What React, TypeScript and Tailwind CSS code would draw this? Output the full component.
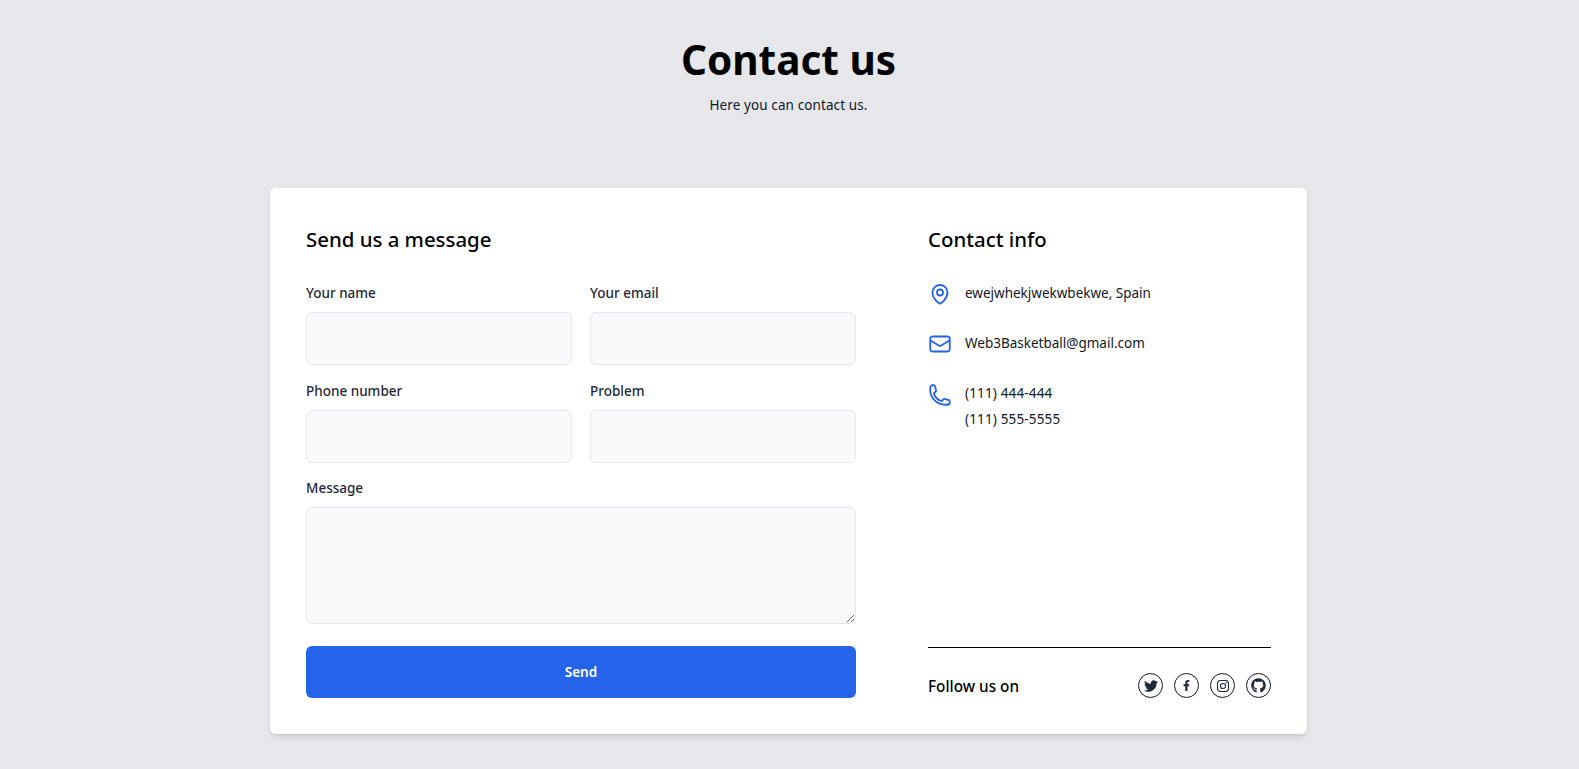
import { HiOutlineEnvelope, HiOutlineMapPin, HiOutlinePhone } from "react-icons/hi2";
import { FaFacebookF, FaGithub, FaTwitter } from "react-icons/fa";
import { BsInstagram } from "react-icons/bs";

const fields = [
  { id: "name", label: "Your name" },
  { id: "email", label: "Your email" },
  { id: "phone", label: "Phone number" },
  { id: "problem", label: "Problem" },
];

const socials = [
  { id: "twitter", icon: <FaTwitter className="w-[14px] h-[14px]" /> },
  { id: "facebook", icon: <FaFacebookF className="w-[11px] h-[11px]" /> },
  { id: "instagram", icon: <BsInstagram className="w-[12px] h-[12px]" /> },
  { id: "github", icon: <FaGithub className="w-[15px] h-[15px]" /> },
];

export default function App() {
  return (
    <div className="min-h-screen pr-[2px] bg-[#e5e7eb] text-black font-['Noto_Sans',sans-serif]">
      {/* Header */}
      <div className="pt-[30px] text-center">
        <h1 className="text-[40.5px] leading-[60px] font-bold">Contact us</h1>
        <p className="mt-[5px] text-[13.5px] leading-5 tracking-[0.1px] text-[#111827]">Here you can contact us.</p>
      </div>

      {/* Card */}
      <div className="mt-[73px] mx-auto w-[1037px] bg-white rounded-md shadow-md p-9 flex">
        {/* Form */}
        <div className="w-[550px]">
          <h2 className="text-[20.4px] leading-[30px] font-medium">Send us a message</h2>
          <div className="mt-[29px] grid grid-cols-2 gap-x-[18px] gap-y-[15.5px]">
            {fields.map((f) => (
              <div key={f.id}>
                <label htmlFor={f.id} className="block text-[13.5px] leading-5 font-medium text-[#1f2937]">
                  {f.label}
                </label>
                <input
                  id={f.id}
                  className="mt-[9px] block w-full h-[53px] rounded-md border border-[#e5e7eb] bg-[#f9fafb]"
                />
              </div>
            ))}
            <div className="col-span-2">
              <label htmlFor="message" className="block text-[13.5px] leading-5 font-medium text-[#1f2937]">
                Message
              </label>
              <textarea
                id="message"
                className="mt-[9px] block w-full h-[117px] rounded-md border border-[#e5e7eb] bg-[#f9fafb]"
              />
            </div>
          </div>
          <button className="mt-[22px] w-full h-[52px] rounded-md bg-[#2563eb] text-white text-[13.5px] font-semibold">
            Send
          </button>
        </div>

        {/* Contact info */}
        <div className="ml-[72px] flex-1 flex flex-col">
          <h2 className="text-[20.4px] leading-[30px] font-medium">Contact info</h2>
          <div className="mt-[29px] flex flex-col gap-[27px] text-[13.5px] text-[#111827]">
            <div className="flex gap-[13px]">
              <HiOutlineMapPin strokeWidth={1.8} className="w-6 h-6 -mt-px text-[#2563eb] shrink-0" />
              <span className="leading-5">ewejwhekjwekwbekwe, Spain</span>
            </div>
            <div className="flex gap-[13px]">
              <HiOutlineEnvelope strokeWidth={1.8} className="w-6 h-6 -mt-px text-[#2563eb] shrink-0" />
              <span className="leading-5">Web3Basketball@gmail.com</span>
            </div>
            <div className="flex gap-[13px]">
              <HiOutlinePhone strokeWidth={1.8} className="w-6 h-6 text-[#2563eb] shrink-0" />
              <div className="leading-[26px] -mt-[3px] tracking-[0.15px]">
                <p>(111) 444-444</p>
                <p>(111) 555-5555</p>
              </div>
            </div>
          </div>
          <div className="mt-auto border-t border-black pt-[25px] flex items-center justify-between">
            <span className="mt-[2px] text-[15.3px] font-medium">Follow us on</span>
            <div className="flex gap-[11px]">
              {socials.map((s) => (
                <a
                  key={s.id}
                  href="#"
                  className="w-[25px] h-[25px] rounded-full border border-[#111827] text-[#1f2937] flex items-center justify-center"
                >
                  {s.icon}
                </a>
              ))}
            </div>
          </div>
        </div>
      </div>
    </div>
  );
}
